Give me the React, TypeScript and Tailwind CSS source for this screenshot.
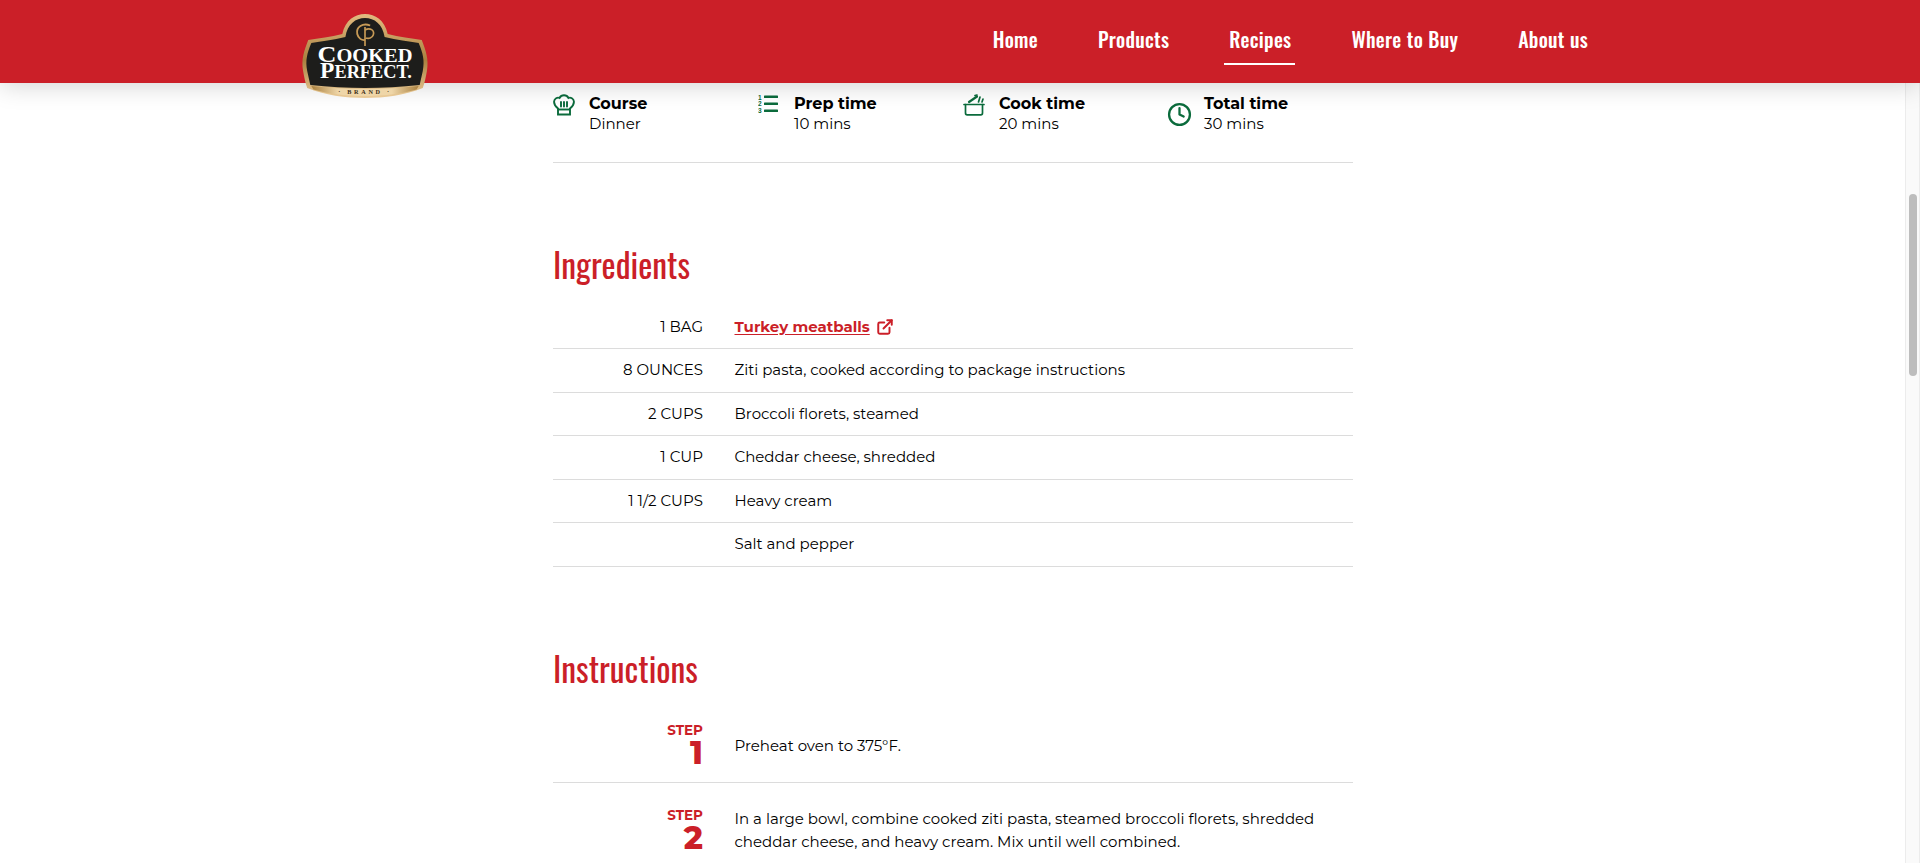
import type { ReactNode } from 'react'
import { Clock, ExternalLink } from 'lucide-react'

const sans = "font-['Montserrat','Inter','Noto_Sans',sans-serif]"
const narrow = "font-['Oswald','Liberation_Sans_Narrow','Roboto',sans-serif]"

const ChefHat = () => (
  <svg width="22" height="22" viewBox="0 0 22 22" fill="none" stroke="#0b6b3c" strokeWidth="1.9">
    <path d="M5 14.5 C2 12 .9 10 1.1 7.5 C1.3 4.5 4.5 3 6.5 4 C7.5 2 9 1.2 11 1.2 C13 1.2 14.5 2 15.5 4 C17.5 3 20.7 4.5 20.9 7.5 C21.1 10 20 12 17 14.5 L17 20.5 L5 20.5 Z" />
    <path d="M5 15.5 H17" />
    <path d="M8 8 V12.5 M11 8 V12.5 M14 8 V12.5" strokeLinecap="round" />
  </svg>
)

const StepsIcon = () => (
  <svg width="22" height="20" viewBox="0 0 22 20" fill="#0b6b3c">
    <text x="0" y="5.5" fontSize="6.5" fontWeight="700" fontFamily="Liberation Sans">1</text>
    <text x="0" y="12.2" fontSize="6.5" fontWeight="700" fontFamily="Liberation Sans">2</text>
    <text x="0" y="19" fontSize="6.5" fontWeight="700" fontFamily="Liberation Sans">3</text>
    <rect x="6" y="1.5" width="14" height="2.6" rx=".6" />
    <rect x="6" y="8.5" width="14" height="2.6" rx=".6" />
    <rect x="6" y="15.5" width="14" height="2.6" rx=".6" />
  </svg>
)

const PotIcon = () => (
  <svg width="22" height="22" viewBox="0 0 22 22" fill="none" stroke="#0b6b3c" strokeWidth="1.7" strokeLinecap="round">
    <path d="M2.5 10.5 V19 C2.5 20 3.2 20.8 4.2 20.8 H17.8 C18.8 20.8 19.5 20 19.5 19 V10.5" />
    <path d="M1 10.5 H21" />
    <path d="M6 8 L14 2.5" strokeWidth="2.2" />
    <path d="M12 1.5 L14 1" />
    <path d="M17 3 L15.5 8 M20 5 L19 8" />
  </svg>
)

const Logo = () => (
  <svg width="130" height="86" viewBox="0 0 126 86" preserveAspectRatio="none">
    <defs>
      <linearGradient id="gold" x1="0" y1="0" x2="0" y2="1">
        <stop offset="0" stopColor="#e2bb80" />
        <stop offset=".55" stopColor="#a9803f" />
        <stop offset="1" stopColor="#eccd9a" />
      </linearGradient>
      <linearGradient id="band" x1="0" y1="0" x2="1" y2="0">
        <stop offset="0" stopColor="#a9803f" />
        <stop offset=".25" stopColor="#efd6a8" />
        <stop offset=".75" stopColor="#efd6a8" />
        <stop offset="1" stopColor="#a9803f" />
      </linearGradient>
    </defs>
    <path d="M41 21 C44 7 53 1 63 1 C73 1 82 7 85 21 C96 24 108 25 118 27 C122 38 125 46 123 58 C122 64 121 69 119 75 C102 82 82 85 63 85 C44 85 24 82 7 75 C5 69 4 64 3 58 C1 46 4 38 8 27 C18 25 30 24 41 21 Z" fill="url(#gold)" />
    <path d="M44 24 C46 11 54 5 63 5 C72 5 80 11 82 24 C94 27 105 28 115 30 C119 40 121 47 119 58 C118 63 117 67 116 72 C98 74 80 75 63 75 C46 75 28 74 10 72 C9 67 8 63 7 58 C5 47 7 40 11 30 C21 28 32 27 44 24 Z" fill="#1d1d1b" />
    <path d="M11 73 C28 75 46 76 63 76 C80 76 98 75 115 73 L113 76.5 C98 81 80 83 63 83 C46 83 28 81 13 76.5 Z" fill="url(#band)" />
    <path d="M68 12.5 C61 9.5 54 14 55.5 21 C56.5 25.5 60 27.5 63 27" fill="none" stroke="#c79a56" strokeWidth="1.8" />
    <path d="M63 14 V33 M63 17 C68 14 72.5 17.5 71 22 C70 25 66.5 26 64 25" fill="none" stroke="#c79a56" strokeWidth="1.6" />
    <text x="63" y="49" textAnchor="middle" fontFamily="Liberation Serif" fontWeight="700" fontSize="18" fill="#fff" textLength="92" lengthAdjust="spacingAndGlyphs"><tspan fontSize="23">C</tspan>OOKED</text>
    <text x="64" y="65" textAnchor="middle" fontFamily="Liberation Serif" fontWeight="700" fontSize="18" fill="#fff" textLength="89" lengthAdjust="spacingAndGlyphs"><tspan fontSize="23">P</tspan>ERFECT.</text>
    <text x="63" y="81" textAnchor="middle" fontFamily="Liberation Serif" fontWeight="700" fontSize="6" letterSpacing="2.6" fill="#3a2c16">· BRAND ·</text>
  </svg>
)

const navItems = ['Home', 'Products', 'Recipes', 'Where to Buy', 'About us']

const facts = [
  { icon: <ChefHat />, label: 'Course', value: 'Dinner' },
  { icon: <StepsIcon />, label: 'Prep time', value: '10 mins' },
  { icon: <PotIcon />, label: 'Cook time', value: '20 mins' },
  { icon: <div className="pt-[8px]"><Clock size={25} color="#0b6b3c" strokeWidth={2.2} /></div>, label: 'Total time', value: '30 mins' },
]

const ingredients = [
  ['8 OUNCES', 'Ziti pasta, cooked according to package instructions'],
  ['2 CUPS', 'Broccoli florets, steamed'],
  ['1 CUP', 'Cheddar cheese, shredded'],
  ['1 1/2 CUPS', 'Heavy cream'],
  ['', 'Salt and pepper'],
]

const Step = ({ n, children }: { n: number; children: ReactNode }) => (
  <div className="flex items-center gap-8 border-b border-[#dcdcdc] pt-[25px] first:pt-[14px] pb-[14px]">
    <div className="w-[150px] text-right text-[#cb1f28] font-bold">
      <div className="text-[13.5px] leading-[13px]">STEP</div>
      <div className="text-[32px] leading-[31px] font-extrabold">{n}</div>
    </div>
    <p className="flex-1 text-[15px] leading-[23px] -ml-[0.5px] -mt-[1px]">{children}</p>
  </div>
)

export default function App() {
  return (
    <div className={`relative h-[863px] overflow-hidden bg-white text-black ${sans}`}>
      <header className="absolute inset-x-0 top-0 z-10 h-[83px] bg-[#cb1f28] shadow-[0_2px_24px_rgba(0,0,0,0.18)]">
        <div className="absolute left-[300px] top-[13px]">
          <Logo />
        </div>
        <nav className={`flex justify-end items-start gap-[60px] pr-[332px] pt-[25px] text-white text-[20px] font-medium tracking-[0.3px] leading-[28px] ${narrow}`}>
          {navItems.map((item) => (
            <a key={item} className={item === 'Recipes' ? 'relative after:absolute after:-left-[5px] after:-right-[4px] after:top-[38px] after:h-[2px] after:bg-white' : ''}>
              {item}
            </a>
          ))}
        </nav>
      </header>

      <main className="w-[800px] ml-[553px] pt-[94px]">
        <section className="grid grid-cols-[repeat(4,205px)] h-[69px] border-b border-[#dcdcdc]">
          {facts.map((f) => (
            <div key={f.label} className="flex gap-[14px]">
              <div className="w-[22px] flex justify-center">{f.icon}</div>
              <div>
                <div className="text-[16px] leading-[19px] font-bold">{f.label}</div>
                <div className="text-[15px] leading-[21px]">{f.value}</div>
              </div>
            </div>
          ))}
        </section>

        <h2 className={`mt-[78px] text-[33.6px] leading-[46px] text-[#cb1f28] ${narrow}`}>Ingredients</h2>
        <div className="mt-[18px]">
          <div className="flex gap-8 items-center h-[44px] border-b border-[#dcdcdc] text-[15px] pt-[1px]">
            <div className="w-[150px] text-right">1 BAG</div>
            <a className="flex items-center gap-[6px] font-bold text-[#cb1f28] -ml-[0.5px]">
              <span className="underline decoration-1 underline-offset-2">Turkey meatballs</span>
              <ExternalLink size={18} strokeWidth={2.6} />
            </a>
          </div>
          {ingredients.map(([qty, name]) => (
            <div key={name} className="flex gap-8 items-center h-[43.5px] border-b border-[#dcdcdc] text-[15px]">
              <div className="w-[150px] text-right">{qty}</div>
              <div className="-ml-[0.5px]">{name}</div>
            </div>
          ))}
        </div>

        <h2 className={`mt-[78.5px] text-[33.6px] leading-[46px] text-[#cb1f28] ${narrow}`}>Instructions</h2>
        <div className="mt-[19px]">
          <Step n={1}>Preheat oven to 375°F.</Step>
          <Step n={2}>
            In a large bowl, combine cooked ziti pasta, steamed broccoli florets, shredded cheddar cheese, and heavy cream. Mix until well combined.
          </Step>
        </div>
      </main>

      <div className="absolute right-0 inset-y-0 w-[15px] bg-[#fafafa] border-x border-[#ececec]">
        <div className="absolute left-[3px] top-[194px] w-[8px] h-[182px] rounded-full bg-[#bdbdbd]" />
      </div>
    </div>
  )
}
